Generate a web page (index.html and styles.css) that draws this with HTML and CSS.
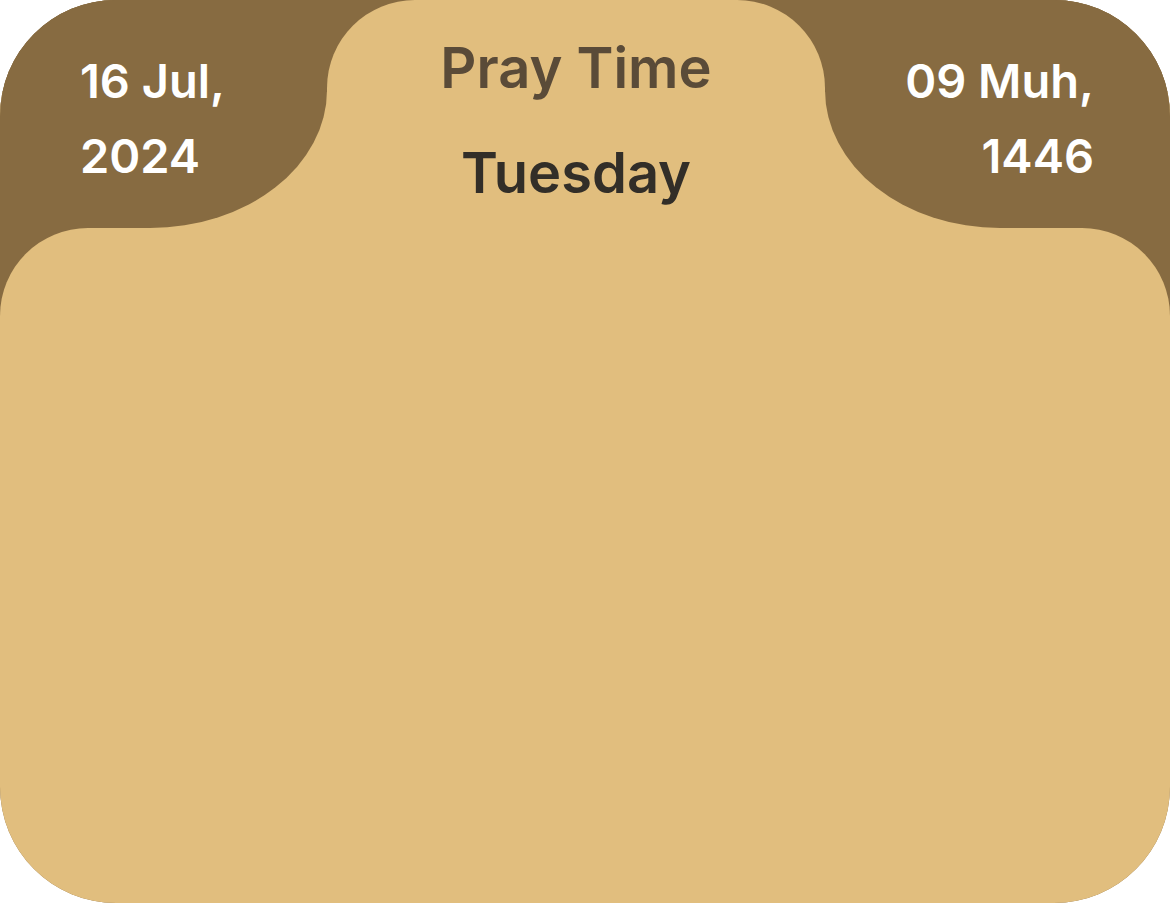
FILE: index.html
```html
<!DOCTYPE html>
<html lang="en">
<head>
<meta charset="utf-8">
<title>Pray Time</title>
<link rel="stylesheet" href="styles.css">
</head>
<body>
<div class="card">
  <header class="head">
    <div class="side side-left">
      <p class="date">16 Jul,<br>2024</p>
    </div>
    <div class="tab">
      <h1 class="title">Pray Time</h1>
      <p class="day">Tuesday</p>
    </div>
    <div class="side side-right">
      <p class="date date-right">09 Muh,<br>1446</p>
    </div>
  </header>
  <main class="content"></main>
</div>
</body>
</html>
```
FILE: styles.css
```css
* { box-sizing: border-box; }
html, body { margin: 0; padding: 0; background: #ffffff; }
body { font-family: "Inter", "Noto Sans", sans-serif; }

.card {
  width: 1170px;
  height: 903px;
  border-radius: 116px;
  overflow: hidden;
  background: #876b41;
  display: flex;
  flex-direction: column;
}

.head {
  display: grid;
  grid-template-columns: 327px 498px 345px;
  height: 228px;
  background: linear-gradient(#876b41 0 92px, #e1be7e 92px);
}

.side { background: #876b41; }
.side-left {
  border-bottom-right-radius: 177px 138px;
  padding: 43px 0 0 80px;
}
.side-right {
  border-bottom-left-radius: 175px 138px;
  padding: 43px 76px 0 0;
  text-align: right;
}

.date {
  margin: 0;
  color: #ffffff;
  font-weight: 600;
  font-size: 47px;
  line-height: 75px;
}

.tab {
  background: #e1be7e;
  border-radius: 88px 88px 0 0;
  text-align: center;
  padding-top: 28px;
}
.title {
  margin: 0;
  font-size: 56px;
  font-weight: 600;
  line-height: 80px;
  color: #5a4b38;
}
.day {
  margin: 25px 0 0;
  font-size: 56px;
  font-weight: 600;
  line-height: 80px;
  color: #322e28;
}

.content {
  flex: 1;
  background: #e1be7e;
  border-radius: 88px 88px 0 0;
}
```
